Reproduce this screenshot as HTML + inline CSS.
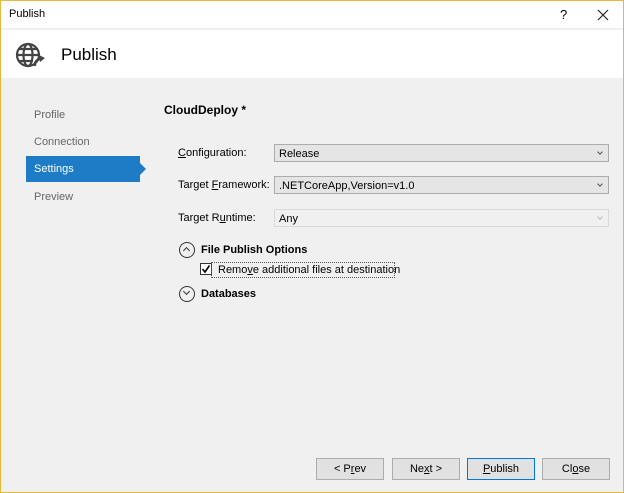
<!DOCTYPE html>
<html><head><style>
*{margin:0;padding:0;box-sizing:border-box}
body{width:624px;height:493px;overflow:hidden;font-family:"Liberation Sans",sans-serif;font-size:11px;color:#000;background:#f0f0f0}
.win{position:absolute;left:0;top:0;width:624px;height:493px;border:1px solid #e8b83a;background:#f0f0f0}
.abs{position:absolute}
.tb{left:0;top:0;width:622px;height:27px;background:#fff}
.hd{left:0;top:29px;width:622px;height:48px;background:#fff}
.nav{left:33px;color:#666}
.sel{left:25px;top:155px;width:114px;height:26px;background:#1e7bc6}
.lbl{left:177px}
.dd{left:273px;width:335px;height:18px;border:1px solid #acacac;background:#e5e5e5;padding:3px 4px;line-height:12px}
.dd:after{content:"";position:absolute;right:6px;top:5px;width:3px;height:3px;border-right:1px solid #555;border-bottom:1px solid #555;transform:rotate(45deg)}
.dis{background:#f0f0f0;border-color:#d9d9d9}
.dis:after{border-color:#bbb}
.circ{width:16px;height:16px;border:1px solid #333;border-radius:50%;left:178px}
.bt{top:457px;width:68px;height:22px;border:1px solid #adadad;background:#e1e1e1;text-align:center;line-height:20px}
u{text-decoration:underline}
</style></head><body><div class="win">
<div class="abs tb"></div>
<div class="abs" style="left:8px;top:7px">Publish</div>
<div class="abs" style="left:559px;top:6px;font-size:13px">?</div>
<svg class="abs" style="left:596px;top:8px" width="12" height="12" viewBox="0 0 12 12" stroke="#222" stroke-width="1.2"><path d="M1 1L11 11M11 1L1 11"/></svg>
<div class="abs hd"></div>
<svg class="abs" style="left:14px;top:40px" width="32" height="30" viewBox="0 0 32 30" fill="none" stroke="#444" stroke-width="2.2">
<circle cx="13" cy="14" r="11"/><ellipse cx="13" cy="14" rx="4.5" ry="11"/><line x1="2" y1="14" x2="24" y2="14"/><line x1="4" y1="8" x2="22" y2="8"/><line x1="4" y1="20" x2="18" y2="20"/>
<path d="M20 25 a6 6 0 0 1 7 -7" stroke-width="2.6"/><path d="M24 14 l6 3 -5 4z" fill="#444" stroke="none"/>
</svg>
<div class="abs" style="left:60px;top:44px;font-size:17px">Publish</div>
<div class="abs nav" style="top:108px">Profile</div>
<div class="abs nav" style="top:135px">Connection</div>
<div class="abs sel"></div>
<div class="abs" style="left:139px;top:162px;width:0;height:0;border-top:6px solid transparent;border-bottom:6px solid transparent;border-left:6px solid #1e7bc6"></div>
<div class="abs" style="left:33px;top:162px;color:#fff">Settings</div>
<div class="abs nav" style="top:190px">Preview</div>
<div class="abs" style="left:163px;top:102px;font-weight:bold;font-size:12px">CloudDeploy *</div>
<div class="abs lbl" style="top:146px"><u>C</u>onfiguration:</div>
<div class="abs dd" style="top:143px">Release</div>
<div class="abs lbl" style="top:178px">Target <u>F</u>ramework:</div>
<div class="abs dd" style="top:175px">.NETCoreApp,Version=v1.0</div>
<div class="abs lbl" style="top:211px">Target R<u>u</u>ntime:</div>
<div class="abs dd dis" style="top:208px">Any</div>
<div class="abs circ" style="top:241px"></div>
<div class="abs" style="left:183px;top:247px;width:5px;height:5px;border-left:1.5px solid #333;border-top:1.5px solid #333;transform:rotate(45deg)"></div>
<div class="abs" style="left:200px;top:243px;font-weight:bold">File Publish Options</div>
<div class="abs" style="left:199px;top:262px;width:12px;height:12px;border:1px solid #333;background:#fff"></div>
<svg class="abs" style="left:200px;top:263px" width="10" height="10" viewBox="0 0 10 10" fill="none" stroke="#000" stroke-width="1.6"><path d="M1.5 5L4 8L8.5 1.5"/></svg>
<div class="abs" style="left:210px;top:261px;width:184px;height:16px;border:1px dotted #555"></div>
<div class="abs" style="left:217px;top:263px">Remo<u>v</u>e additional files at destination</div>
<div class="abs circ" style="top:285px"></div>
<div class="abs" style="left:183px;top:288px;width:5px;height:5px;border-right:1.5px solid #333;border-bottom:1.5px solid #333;transform:rotate(45deg)"></div>
<div class="abs" style="left:200px;top:287px;font-weight:bold">Databases</div>
<div class="abs bt" style="left:315px">&lt; P<u>r</u>ev</div>
<div class="abs bt" style="left:391px">Ne<u>x</u>t &gt;</div>
<div class="abs bt" style="left:466px;border-color:#0078d7"><u>P</u>ublish</div>
<div class="abs bt" style="left:541px">Cl<u>o</u>se</div>
</div></body></html>
